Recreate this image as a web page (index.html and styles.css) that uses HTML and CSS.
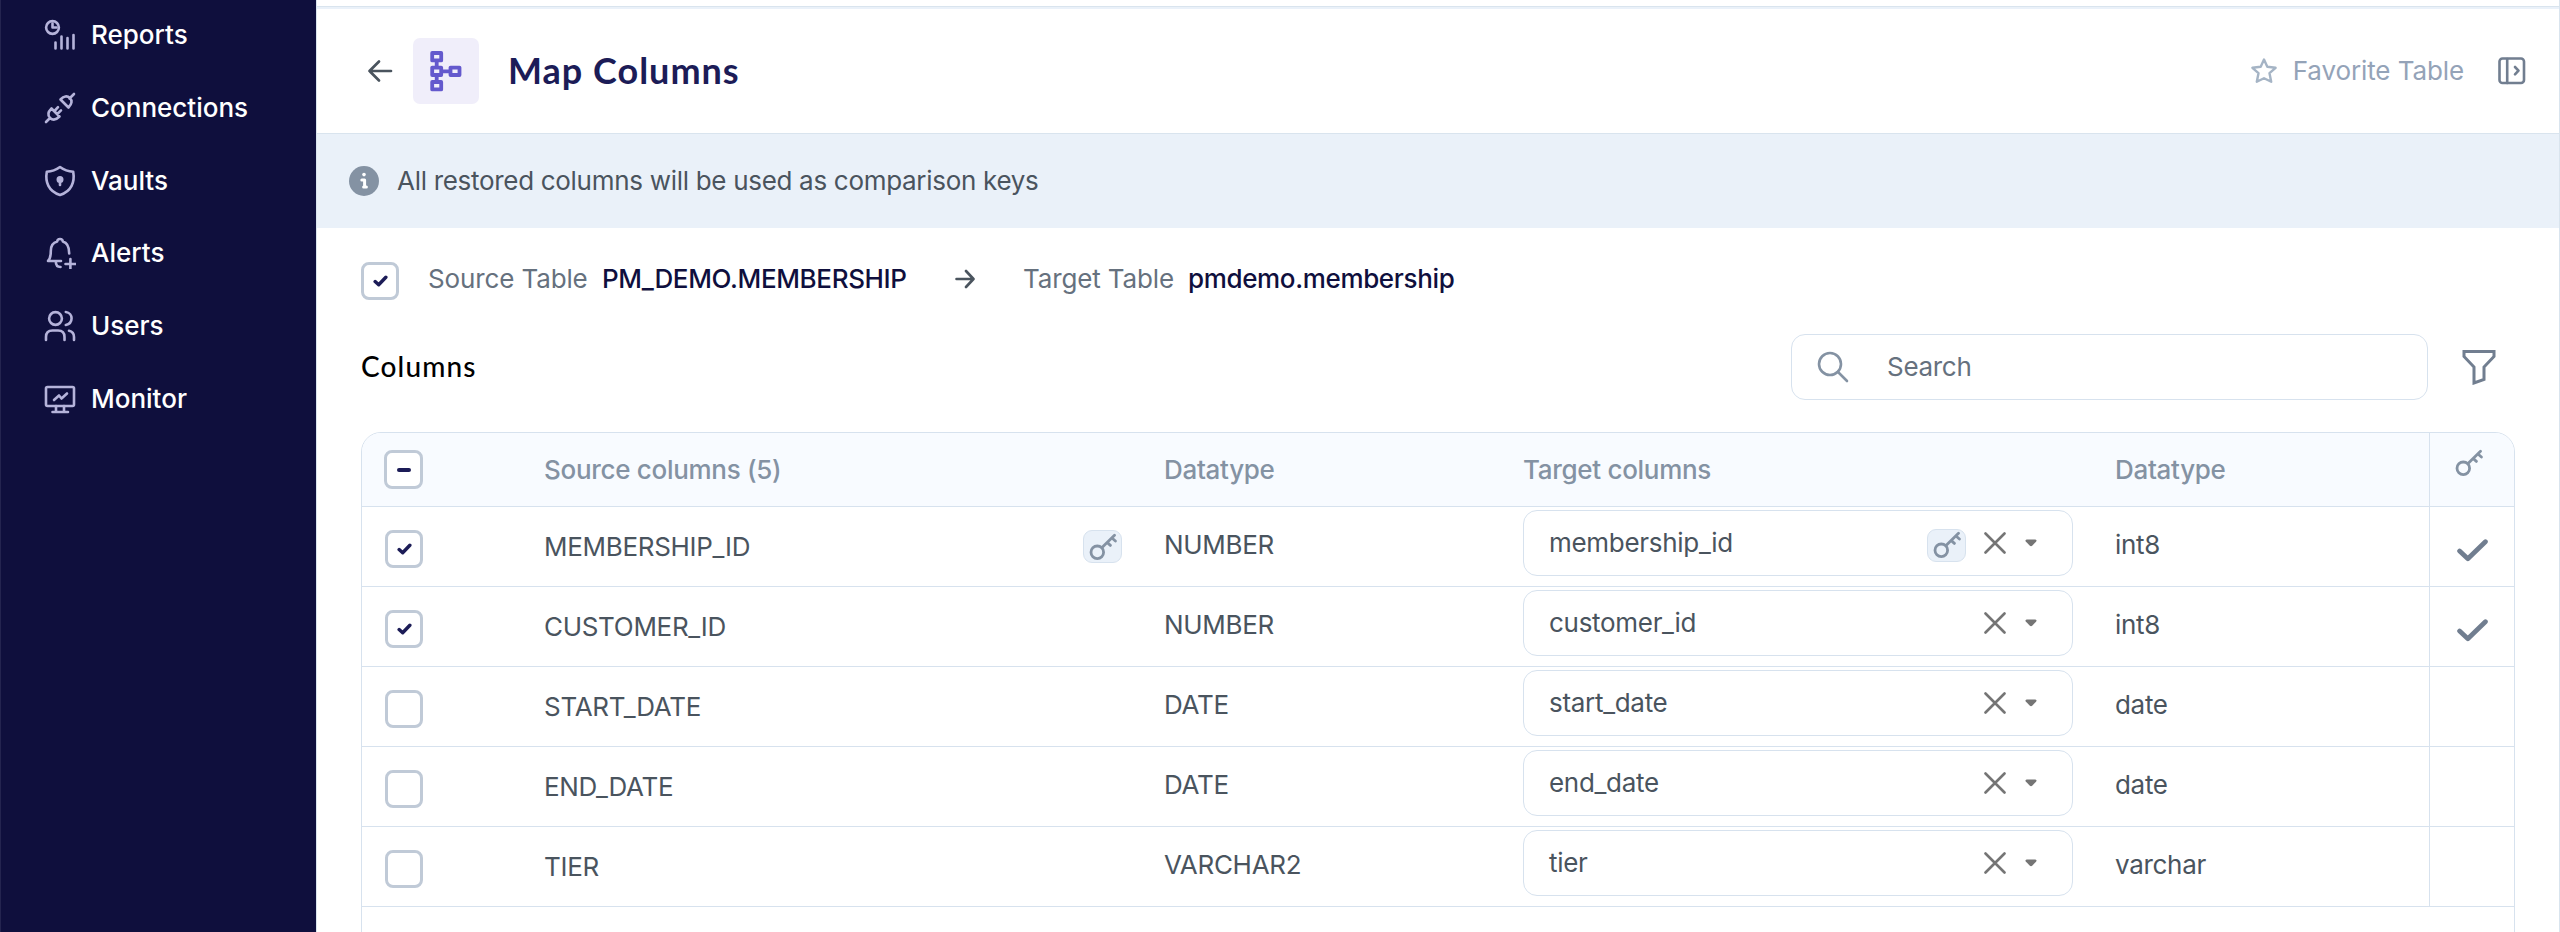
FILE: index.html
```html
<!DOCTYPE html>
<html lang="en">
<head>
    <meta charset="UTF-8">
    <meta name="viewport" content="width=device-width, initial-scale=1.0">
    <title>Map Columns</title>
    <link rel="stylesheet" href="styles.css">
</head>
<body>
    <!-- Shared icons -->
    <svg class="icon-defs" aria-hidden="true">
        <symbol id="icon-key" viewBox="0 0 28 28">
            <circle cx="8.3" cy="19.3" r="6.3"/>
            <path d="M13 14.6 L25.5 2.2 M23 5 L26.4 8 M18.3 9.6 L21.4 12.4"/>
        </symbol>
        <symbol id="icon-check" viewBox="0 0 14 11">
            <path d="M2 6 L5.3 9 L12 2"/>
        </symbol>
        <symbol id="icon-tick" viewBox="0 0 30 22">
            <path d="M2.5 11.5 L10.5 19 L27.5 2.5"/>
        </symbol>
        <symbol id="icon-close" viewBox="0 0 22 22">
            <path d="M1.5 1.5 L20.5 20.5 M20.5 1.5 L1.5 20.5"/>
        </symbol>
        <symbol id="icon-caret" viewBox="0 0 12 8">
            <path d="M1.6 0.4 H10.4 Q12.2 0.8 11.2 2.6 L7.4 6.6 Q6 7.8 4.6 6.6 L0.8 2.6 Q-0.2 0.8 1.6 0.4 Z"/>
        </symbol>
    </svg>

    <aside class="sidebar">
        <ul class="nav-menu">
            <li><a href="#reports">
                <svg viewBox="0 0 32 32"><circle cx="8.5" cy="8.5" r="6.4"/><path d="M8.5 4.5 V8.5 H12.5 M11.5 23.5 V29.5 M17.5 17.5 V29.5 M23.5 19 V29.5 M29.5 16 V29.5"/></svg>
                <span>Reports</span></a></li>
            <li><a href="#connections">
                <svg viewBox="0 0 32 32"><path d="M30 2 L25.5 6.5 M16.5 7.5 L24.5 15.5 C28 12 28.5 8.5 25.8 6 C23.2 3.4 19.8 4 16.5 7.5 Z M2 30 L6 26 M7.5 16.5 L15.5 24.5 C12 28 8.5 28.3 6 25.8 C3.5 23.3 4 20 7.5 16.5 Z M10.5 19 L14 15.2 M13.3 22 L17 18.3"/></svg>
                <span>Connections</span></a></li>
            <li><a href="#vaults">
                <svg viewBox="0 0 32 32"><path d="M16 2 C12 5 8 6.5 2.8 6.8 C1 17 4.5 26.5 16 30 C27.5 26.5 31 17 29.2 6.8 C24 6.5 20 5 16 2 Z"/><circle class="solid" cx="16" cy="14.5" r="2.2"/><path d="M16 15 V20"/></svg>
                <span>Vaults</span></a></li>
            <li><a href="#alerts">
                <svg viewBox="0 0 32 32"><path d="M17 24 H4 C6.5 21.5 6.8 19 6.8 14 C6.8 8.5 9.5 5.5 13.2 4.5 C13.5 1.2 18.5 1.2 18.8 4.5 C22.8 5.5 25.2 9 25.2 16.5 M11.8 24.5 C11.8 28 13.5 30 16.5 30 M21.5 27 H31.3 M26.4 22 V32"/></svg>
                <span>Alerts</span></a></li>
            <li><a href="#users">
                <svg viewBox="0 0 32 32"><circle cx="11.5" cy="8.5" r="6.4"/><path d="M2 30 V27 C2 22.5 4.5 20.5 8.5 20.5 H14 C18.5 20.5 20.5 22.5 20.5 27 V30 M21.8 2 C29.5 3 29.5 13.5 21.8 15 M25 20.8 C28.5 21.5 30 23.5 30 27 V30"/></svg>
                <span>Users</span></a></li>
            <li><a href="#monitor">
                <svg viewBox="0 0 32 32"><rect x="2" y="4" width="28" height="19" rx="1.5"/><path d="M12 23 V29 M20 23 V29 M8.5 29 H24 M10 17 L15 12.5 L17.5 15.5 L23 10.5"/></svg>
                <span>Monitor</span></a></li>
        </ul>
    </aside>

    <main class="content">
        <header class="page-header">
            <svg class="back-arrow" viewBox="0 0 24 20"><path d="M23 10 H1.5 M11 0.5 L1.5 10 L11 19.5"/></svg>
            <div class="page-icon">
                <svg viewBox="0 0 32 42"><rect x="2.2" y="3" width="9" height="7.4"/><rect x="2.2" y="17.6" width="9" height="7.4"/><rect x="2.2" y="32" width="9" height="7.4"/><rect x="20.5" y="17.6" width="9" height="7.4"/><path d="M6.7 11 V17 M6.7 25.6 V31.5 M12 21.3 H20"/></svg>
            </div>
            <h1>Map Columns</h1>
            <div class="header-actions">
                <svg class="star" viewBox="0 0 28 28"><path d="M14 2.6 L17.3 9.8 L25.6 10.8 L19.5 16.2 L21.2 24.8 L14 21.2 L6.8 24.8 L8.5 16.2 L2.4 10.8 L10.7 9.8 Z"/></svg>
                <span class="favorite">Favorite Table</span>
                <svg class="panel-toggle" viewBox="0 0 28 28"><rect x="1.5" y="1.5" width="24.5" height="24.5" rx="3"/><path d="M9.2 2 V26 M17 10 L20.5 13.7 L17 17.4"/></svg>
            </div>
        </header>

        <div class="info-banner">
            <svg viewBox="0 0 30 30"><circle cx="15" cy="15" r="15"/><path d="M12.8 14 H15.6 V21 M14.6 21 H17.4"/><circle class="info-dot" cx="15" cy="8.6" r="1.8"/></svg>
            <span>All restored columns will be used as comparison keys</span>
        </div>

        <div class="mapping-row">
            <span class="checkbox checked"><svg><use href="#icon-check"/></svg></span>
            <span class="mapping-label source-label">Source Table</span>
            <span class="mapping-name source-name">PM_DEMO.MEMBERSHIP</span>
            <svg class="mapping-arrow" viewBox="0 0 20 20"><path d="M1.5 10 H18 M11 2 L18.5 10 L11 18"/></svg>
            <span class="mapping-label target-label">Target Table</span>
            <span class="mapping-name target-name">pmdemo.membership</span>
        </div>

        <div class="toolbar">
            <h2>Columns</h2>
            <div class="search-box">
                <svg viewBox="0 0 32 32"><circle cx="13" cy="13" r="11"/><path d="M21 21 L30 30"/></svg>
                <span>Search</span>
            </div>
            <svg class="filter" viewBox="0 0 34 36"><path d="M2 2.5 H32 V7.5 L22 18 V30.5 L12 34 V18 L2 7.5 Z"/></svg>
        </div>

        <div class="table">
            <div class="row head">
                <div class="cell select-cell"><span class="checkbox"><i class="dash"></i></span></div>
                <div class="cell source">Source columns (5)</div>
                <div class="cell type">Datatype</div>
                <div class="cell target">Target columns</div>
                <div class="cell target-type">Datatype</div>
                <div class="cell key"><svg class="key-icon"><use href="#icon-key"/></svg></div>
            </div>
            <div class="row">
                <div class="cell select-cell"><span class="checkbox checked"><svg><use href="#icon-check"/></svg></span></div>
                <div class="cell source">MEMBERSHIP_ID <span class="key-badge"><svg class="key-icon"><use href="#icon-key"/></svg></span></div>
                <div class="cell type">NUMBER</div>
                <div class="cell target"><div class="dropdown"><span>membership_id</span><span class="key-badge"><svg class="key-icon"><use href="#icon-key"/></svg></span><svg class="close"><use href="#icon-close"/></svg><svg class="caret"><use href="#icon-caret"/></svg></div></div>
                <div class="cell target-type">int8</div>
                <div class="cell key"><svg class="tick"><use href="#icon-tick"/></svg></div>
            </div>
            <div class="row">
                <div class="cell select-cell"><span class="checkbox checked"><svg><use href="#icon-check"/></svg></span></div>
                <div class="cell source">CUSTOMER_ID</div>
                <div class="cell type">NUMBER</div>
                <div class="cell target"><div class="dropdown"><span>customer_id</span><svg class="close"><use href="#icon-close"/></svg><svg class="caret"><use href="#icon-caret"/></svg></div></div>
                <div class="cell target-type">int8</div>
                <div class="cell key"><svg class="tick"><use href="#icon-tick"/></svg></div>
            </div>
            <div class="row">
                <div class="cell select-cell"><span class="checkbox"></span></div>
                <div class="cell source">START_DATE</div>
                <div class="cell type">DATE</div>
                <div class="cell target"><div class="dropdown"><span>start_date</span><svg class="close"><use href="#icon-close"/></svg><svg class="caret"><use href="#icon-caret"/></svg></div></div>
                <div class="cell target-type">date</div>
                <div class="cell key"></div>
            </div>
            <div class="row">
                <div class="cell select-cell"><span class="checkbox"></span></div>
                <div class="cell source">END_DATE</div>
                <div class="cell type">DATE</div>
                <div class="cell target"><div class="dropdown"><span>end_date</span><svg class="close"><use href="#icon-close"/></svg><svg class="caret"><use href="#icon-caret"/></svg></div></div>
                <div class="cell target-type">date</div>
                <div class="cell key"></div>
            </div>
            <div class="row">
                <div class="cell select-cell"><span class="checkbox"></span></div>
                <div class="cell source">TIER</div>
                <div class="cell type">VARCHAR2</div>
                <div class="cell target"><div class="dropdown"><span>tier</span><svg class="close"><use href="#icon-close"/></svg><svg class="caret"><use href="#icon-caret"/></svg></div></div>
                <div class="cell target-type">varchar</div>
                <div class="cell key"></div>
            </div>
        </div>
    </main>
</body>
</html>
```
FILE: styles.css
```css
* {
    margin: 0;
    padding: 0;
    box-sizing: border-box;
}

body {
    display: flex;
    height: 932px;
    overflow: hidden;
    background: #fff;
    color: #4a545e;
    font-family: Inter, "Liberation Sans", sans-serif;
    font-size: 26px;
    letter-spacing: -0.3px;
    line-height: 32px;
    white-space: nowrap;
}

svg {
    display: block;
    flex: none;
    fill: none;
    stroke: currentColor;
    stroke-linecap: round;
    stroke-linejoin: round;
}

.icon-defs {
    position: absolute;
    width: 0;
    height: 0;
}

/* Sidebar */
.sidebar {
    flex: none;
    width: 316px;
    background: #0f0f3d;
    border-left: 1px solid #24244f;
}

.nav-menu {
    margin-top: -1px;
    list-style: none;
}

.nav-menu a {
    display: flex;
    align-items: center;
    gap: 15px;
    height: 72.7px;
    padding-left: 43px;
    color: #fff;
    font-weight: 500;
    letter-spacing: 0;
    text-decoration: none;
}

.nav-menu svg {
    width: 32px;
    height: 32px;
    color: #b5b3da;
    stroke-width: 2.6;
}

.solid {
    fill: currentColor;
}

/* Header */
.content {
    flex: 1;
    min-width: 0;
    padding-top: 6px;
    border-left: 1px solid #d9e4ee;
    border-right: 1px solid #d9e4ee;
}

.page-header {
    display: flex;
    align-items: center;
    height: 128px;
    padding: 2px 33px 0 51px;
    border-top: 1px solid #d9e4ee;
    border-bottom: 1px solid #d9e4ee;
    box-shadow: inset 0 2px #eaf1f9;
}

.back-arrow {
    width: 24px;
    height: 20px;
    overflow: visible;
    color: #4a545e;
    stroke-width: 2.7;
}

.page-icon {
    display: flex;
    align-items: center;
    justify-content: center;
    width: 66px;
    height: 66px;
    margin-left: 21px;
    border-radius: 7px;
    background: #f0eefa;
}

.page-icon svg {
    width: 32px;
    height: 42px;
    color: #6459cd;
    stroke-width: 3.8;
}

.page-header h1 {
    margin-left: 29px;
    padding-bottom: 3px;
    color: #1c1c57;
    font-family: Lato, "Open Sans", sans-serif;
    font-size: 36px;
    font-weight: 700;
    letter-spacing: 1px;
    line-height: 44px;
}

.header-actions {
    display: flex;
    align-items: center;
    margin-left: auto;
}

.star {
    width: 28px;
    height: 28px;
    color: #a5b4c5;
    stroke-width: 2.4;
}

.favorite {
    margin: 0 34px 0 15px;
    color: #94a3b8;
    letter-spacing: -0.1px;
}

.panel-toggle {
    width: 28px;
    height: 28px;
    color: #717e90;
    stroke-width: 2.6;
}

.info-banner {
    display: flex;
    align-items: center;
    gap: 18px;
    height: 94px;
    padding-left: 32px;
    background: #eaf1f9;
}

.info-banner svg {
    width: 30px;
    height: 30px;
    fill: #8492a3;
    stroke: none;
}

.info-banner path {
    fill: none;
    stroke: #fff;
    stroke-width: 3;
}

.info-banner .info-dot {
    fill: #fff;
}

/* Source / target mapping */
.mapping-row {
    display: flex;
    align-items: flex-start;
    height: 106px;
    padding: 34px 0 0 44px;
}

.mapping-row > :not(.checkbox):not(svg) {
    margin-top: 1px;
}

.mapping-label {
    color: #66717e;
    letter-spacing: -0.13px;
}

.mapping-name {
    color: #0f0f3d;
    font-weight: 500;
    letter-spacing: -0.35px;
}

.source-label {
    width: 174px;
    margin-left: 29px;
}

.source-name {
    width: 353px;
}

.mapping-arrow {
    width: 20px;
    height: 20px;
    margin-top: 7px;
    color: #4a545e;
    stroke-width: 2.6;
}

.target-label {
    width: 165px;
    margin-left: 48px;
}

.checkbox {
    display: flex;
    flex: none;
    align-items: center;
    justify-content: center;
    width: 38px;
    height: 38px;
    border: 3px solid #c0cad7;
    border-radius: 8px;
    background: #fff;
}

.checkbox svg {
    width: 15px;
    height: 12px;
    color: #1c1c57;
    stroke-width: 3.2;
}

.dash {
    width: 14px;
    height: 4px;
    border-radius: 2px;
    background: #1c1c57;
}

.toolbar {
    display: flex;
    align-items: center;
    height: 66px;
    padding: 0 63px 0 44px;
}

.toolbar h2 {
    padding-bottom: 2px;
    color: #000;
    font-family: Lato, "Open Sans", sans-serif;
    font-size: 28px;
    font-weight: 500;
    letter-spacing: 1.15px;
}

.search-box {
    display: flex;
    align-items: center;
    gap: 38px;
    width: 637px;
    height: 66px;
    margin-left: auto;
    padding-left: 25px;
    border: 1px solid #d7e2ee;
    border-radius: 14px;
    color: #66717e;
}

.search-box svg {
    width: 32px;
    height: 32px;
    color: #8492a3;
    stroke-width: 2.6;
}

.filter {
    width: 34px;
    height: 36px;
    margin-left: 34px;
    color: #717e90;
    stroke-width: 3;
    stroke-linejoin: miter;
}

/* Columns table */
.table {
    width: 2154px;
    height: 540px;
    margin: 32px 0 0 44px;
    overflow: hidden;
    border: 1px solid #d7e2ee;
    border-radius: 20px;
}

.row {
    display: grid;
    grid-template-columns: 182px 620px 359px 592px 314px 85px;
    height: 80px;
    border-bottom: 1px solid #d7e2ee;
}

.row.head {
    height: 74px;
    background: #f8fbff;
    color: #8492a3;
    font-weight: 500;
}

.cell {
    display: flex;
    align-items: center;
    padding-bottom: 3px;
}

.head .cell {
    padding-bottom: 0;
}

.select-cell {
    align-items: flex-start;
    padding: 23px 0 0 23px;
}

.head .select-cell {
    padding: 17px 0 0 22px;
}

.head .checkbox {
    width: 39px;
    height: 39px;
}

.source {
    justify-content: space-between;
    padding: 0 42px 0 0;
}

.row:not(.head) .target {
    align-items: flex-start;
    padding-top: 3px;
}

.dropdown {
    display: flex;
    align-items: center;
    width: 550px;
    height: 66px;
    padding: 0 35px 0 25px;
    border: 1px solid #d7e2ee;
    border-radius: 14px;
}

.dropdown > span:first-child {
    flex: 1;
}

.key-badge {
    display: flex;
    align-items: center;
    justify-content: center;
    width: 39px;
    height: 33px;
    border: 1px solid #d7e2ee;
    border-radius: 9px;
    background: #eaf1f9;
}

.key-icon {
    width: 28px;
    height: 28px;
    color: #8492a3;
    stroke-width: 2.8;
}

.dropdown .key-badge {
    margin-top: 4px;
}

.close {
    width: 22px;
    height: 22px;
    margin-left: 18px;
    color: #757575;
    stroke-width: 2.6;
}

.caret {
    width: 12px;
    height: 8px;
    margin-left: 19px;
    fill: #757575;
    stroke: none;
}

.key {
    justify-content: center;
    padding: 7px 0 0;
    border-left: 1px solid #d7e2ee;
}

.head .key {
    padding: 0 7px 18px 0;
}

.head .key .key-icon {
    margin-top: 4px;
}

.tick {
    width: 31px;
    height: 23px;
    color: #717e90;
    stroke-width: 4.6;
}
```
